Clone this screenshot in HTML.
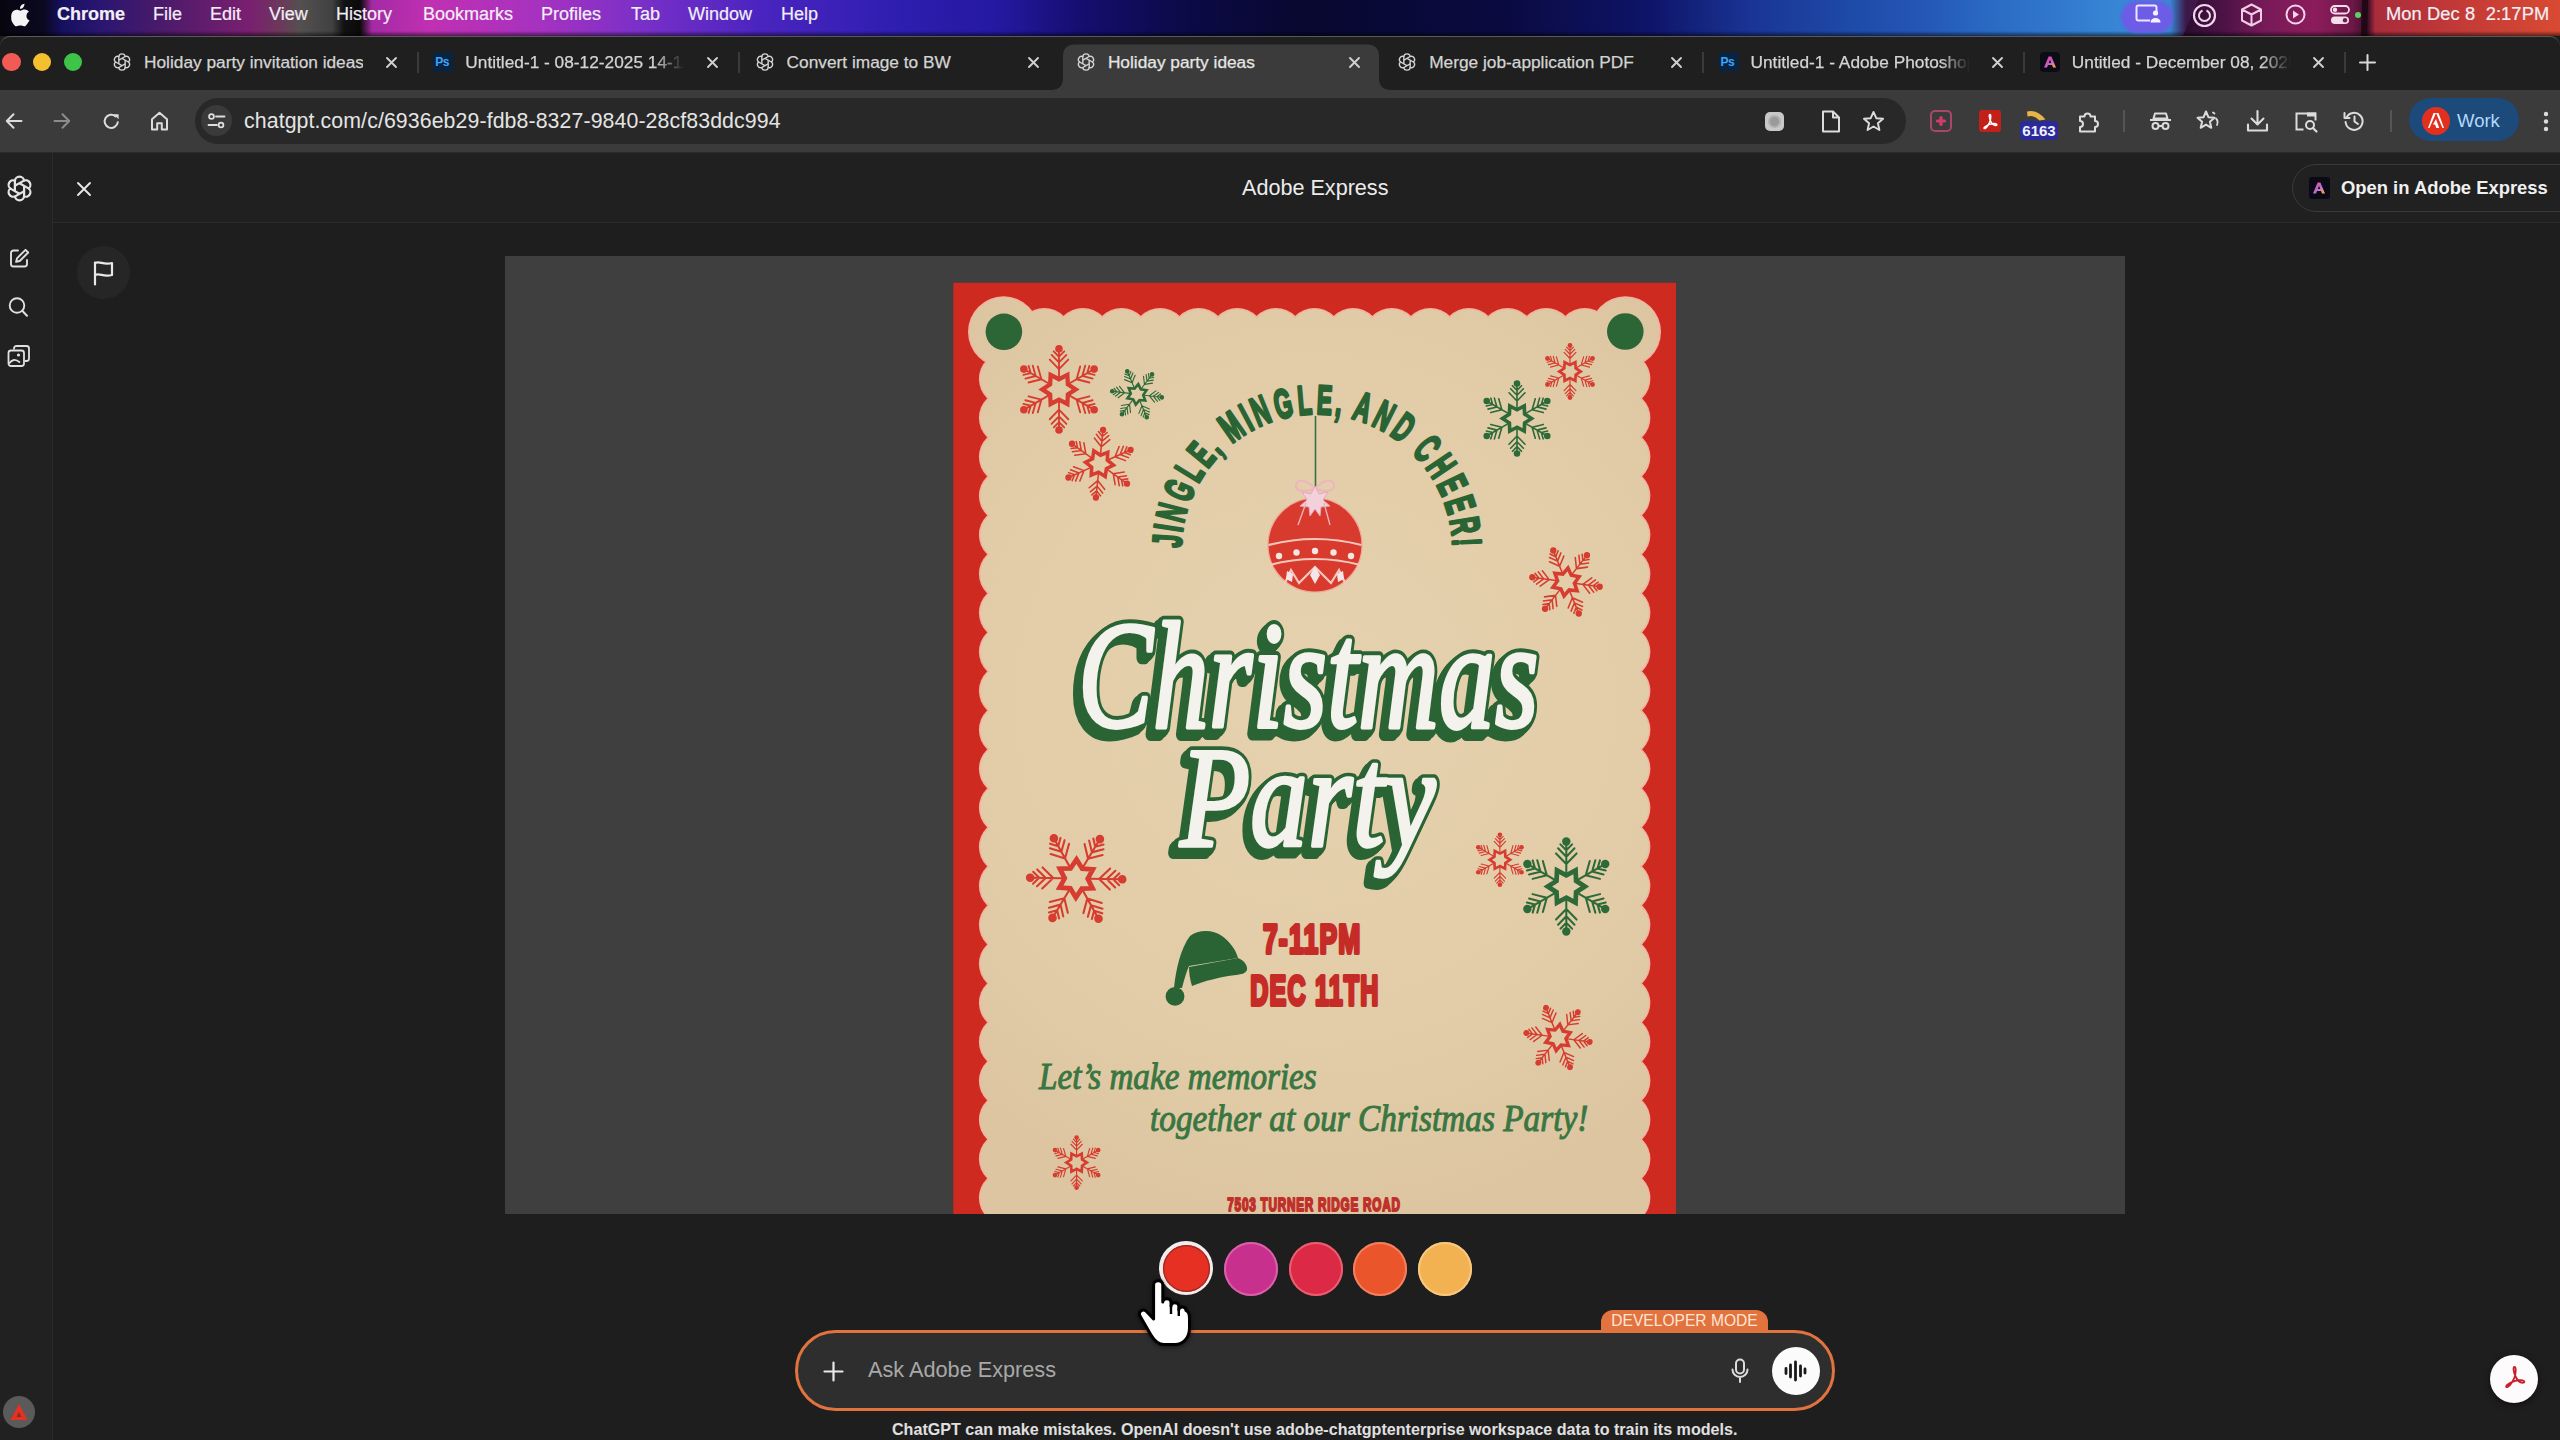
<!DOCTYPE html>
<html><head><meta charset="utf-8">
<style>
*{margin:0;padding:0;box-sizing:border-box}
html,body{width:2560px;height:1440px;overflow:hidden;background:#1e1e1e;font-family:"Liberation Sans",sans-serif;color:#e8e8e8}
.a{position:absolute}
svg{position:absolute;overflow:visible}
#menubar{left:0;top:0;width:2560px;height:36px;background:linear-gradient(90deg,#07060f 0px,#0b0820 44px,#161060 62px,#2a1670 100px,#4a1a6a 160px,#7a1f70 250px,#6a3a5a 282px,#545050 300px,#414141 332px,#121212 344px,#0a0a0a 360px,#a42aa4 372px,#c030b2 430px,#a632c0 540px,#7a30c8 640px,#4a24c0 760px,#2e1eb0 900px,#2418a0 1000px,#160e70 1080px,#0c0a48 1180px,#080830 1300px,#0a0a40 1500px,#0e1468 1650px,#1a3494 1750px,#1e4aa8 1850px,#2456b6 1920px,#2a6ac4 1990px,#3886d6 2120px,#3a86d4 2170px,#3a1848 2186px,#6a1a52 2250px,#8a1c5a 2310px,#6a1846 2352px,#1e0a16 2364px,#a83038 2374px,#c03c38 2460px,#d84a30 2560px)}
.mi{position:absolute;top:3px;font-size:18px;line-height:22px;color:#f2eef6;white-space:nowrap;-webkit-text-stroke:0.2px currentColor}
#tabstrip{left:0;top:36px;width:2560px;height:54px;background:#1f1f1f;border-top:1px solid #5a5a5a;border-radius:10px 10px 0 0}
.tt{position:absolute;top:51px;font-size:17.3px;line-height:22px;color:#d8d8d8;white-space:nowrap;overflow:hidden;-webkit-text-stroke:0.25px currentColor}
.tx{position:absolute;top:52px;font-size:20px;line-height:20px;color:#d0d0d0}
.sep{position:absolute;top:52px;width:2px;height:21px;background:#3a3a3a}
#toolbar{left:0;top:90px;width:2560px;height:63px;background:#3b3b3b}
#omni{left:195px;top:98px;width:1711px;height:46px;background:#282828;border-radius:23px}
#sidebar{left:0;top:153px;width:53px;height:1287px;background:#212121;border-right:1.5px solid #2b2b2b}
#header{left:53px;top:153px;width:2507px;height:70px;background:#202020;border-bottom:1.5px solid #2a2a2a}
#canvas{left:505px;top:256px;width:1620px;height:958px;background:#3f3f3f;overflow:hidden}
</style></head><body>
<div id="menubar" class="a"></div>
<svg style="left:2170px;top:0" width="390" height="36" viewBox="0 0 390 36"><defs><linearGradient id="mbr" x1="0" y1="0" x2="1" y2="0"><stop offset="0" stop-color="#2a0c30"/><stop offset=".1" stop-color="#4a1244"/><stop offset=".22" stop-color="#781a58"/><stop offset=".35" stop-color="#8c1c5c"/><stop offset=".45" stop-color="#6c1848"/><stop offset=".49" stop-color="#3a0e26"/><stop offset=".51" stop-color="#a82c3c"/><stop offset=".7" stop-color="#c03838"/><stop offset="1" stop-color="#d84a32"/></linearGradient></defs><path d="M28 0H390V36H13z" fill="url(#mbr)"/><path d="M192 0h6l-1 36h-6z" fill="#1a0810" opacity=".85"/></svg>
<div class="a" style="left:0;top:31px;width:2560px;height:5px;background:linear-gradient(180deg,rgba(0,0,0,0) 0,rgba(0,0,0,.55) 100%)"></div>
<svg style="left:11px;top:3px" width="20" height="24" viewBox="0 0 170 200"><path fill="#f4f4f4" d="M150.4 155.6c-2.8 6.4-6.1 12.3-9.9 17.7-5.2 7.4-9.5 12.5-12.8 15.3-5.1 4.7-10.6 7.1-16.5 7.3-4.2 0-9.3-1.2-15.2-3.6-6-2.4-11.5-3.6-16.5-3.6-5.3 0-10.9 1.2-17 3.6-6.1 2.4-11 3.7-14.7 3.8-5.7.2-11.3-2.3-16.9-7.5-3.6-3.1-8.1-8.4-13.4-16-5.7-8.1-10.4-17.5-14.1-28.2C3.4 132.8 1.4 121.5 1.4 110.6c0-12.5 2.7-23.3 8.1-32.3 4.2-7.2 9.9-12.9 16.9-17.1 7-4.2 14.6-6.3 22.8-6.5 4.5 0 10.3 1.4 17.6 4.1 7.3 2.7 12 4.1 14 4.1 1.5 0 6.7-1.6 15.4-4.9 8.3-3 15.3-4.2 21-3.7 15.5 1.2 27.1 7.3 34.8 18.3-13.8 8.4-20.7 20.2-20.6 35.4.1 11.8 4.4 21.6 12.8 29.4 3.8 3.6 8.1 6.4 12.8 8.4-1 3-2.1 5.8-3.2 8.6zM115 7.4c0 9.3-3.4 17.9-10.1 25.9-8.1 9.5-18 15-28.6 14.2-.1-1.1-.2-2.3-.2-3.6 0-8.9 3.9-18.4 10.8-26.2 3.4-3.9 7.8-7.2 13.1-9.8 5.3-2.6 10.3-4 15-4.2.1 1.2.2 2.5.2 3.7z"/></svg>
<div class="mi" style="left:57px;top:3px;font-weight:bold;font-size:18px">Chrome</div>
<div class="mi" style="left:153px;top:3px">File</div>
<div class="mi" style="left:210px;top:3px">Edit</div>
<div class="mi" style="left:269px;top:3px">View</div>
<div class="mi" style="left:336px;top:3px">History</div>
<div class="mi" style="left:423px;top:3px">Bookmarks</div>
<div class="mi" style="left:541px;top:3px">Profiles</div>
<div class="mi" style="left:631px;top:3px">Tab</div>
<div class="mi" style="left:688px;top:3px">Window</div>
<div class="mi" style="left:781px;top:3px">Help</div>
<!-- right status icons -->
<div class="a" style="left:2121px;top:1px;width:52px;height:32px;border-radius:16px;background:#6c5ce6;filter:blur(1.5px)"></div>
<svg style="left:2134px;top:4px" width="30" height="20" viewBox="0 0 30 20"><rect x="2.5" y="1.5" width="20" height="15" rx="2" fill="none" stroke="#eee6ff" stroke-width="2"/><rect x="16" y="8" width="12" height="12" fill="#6c5ce6"/><circle cx="21.5" cy="9" r="2.6" fill="#f4f0ff"/><path d="M16.5 18.5c0-3 2.2-4.6 5-4.6s5 1.6 5 4.6z" fill="#f4f0ff"/></svg>
<svg style="left:2192px;top:3px" width="25" height="25" viewBox="0 0 25 25"><circle cx="12.5" cy="12.5" r="10.5" fill="none" stroke="#f0d4ee" stroke-width="2.2"/><path d="M10.5 7.5a5.5 5.5 0 1 0 4 0" fill="none" stroke="#f0d4ee" stroke-width="2"/></svg>
<svg style="left:2240px;top:3px" width="23" height="24" viewBox="0 0 23 24"><path d="M11.5 1.5l9.5 5v11l-9.5 5-9.5-5v-11z M2 6.5l9.5 5 9.5-5 M11.5 11.5v11" fill="none" stroke="#f0cde6" stroke-width="2" stroke-linejoin="round"/></svg>
<svg style="left:2285px;top:4px" width="21" height="21" viewBox="0 0 21 21"><circle cx="10.5" cy="10.5" r="9" fill="none" stroke="#f4d4ea" stroke-width="2"/><path d="M8 6.5l6 4-6 4z" fill="#f4d4ea"/></svg>
<svg style="left:2330px;top:5px" width="20" height="20" viewBox="0 0 20 20"><rect x="1" y="1" width="18" height="7.5" rx="3.75" fill="none" stroke="#f4dcec" stroke-width="1.8"/><circle cx="5" cy="4.75" r="2.2" fill="#f4dcec"/><rect x="1" y="11.5" width="18" height="7.5" rx="3.75" fill="#f4dcec"/><circle cx="15" cy="15.25" r="2.2" fill="#6a2040"/></svg>
<div class="a" style="left:2355px;top:12px;width:6px;height:6px;border-radius:3px;background:#5cd060"></div>
<div class="mi" style="left:2386px;top:3px;font-size:18.3px;letter-spacing:0.1px">Mon Dec 8&nbsp;&nbsp;2:17PM</div>
<div id="tabstrip" class="a"></div>
<div class="a" style="left:2.3000000000000007px;top:53.0px;width:18.4px;height:18.4px;border-radius:50%;background:#f25a55"></div>
<div class="a" style="left:32.599999999999994px;top:53.0px;width:18.4px;height:18.4px;border-radius:50%;background:#f5c02e"></div>
<div class="a" style="left:63.8px;top:53.0px;width:18.4px;height:18.4px;border-radius:50%;background:#3fc44a"></div>
<svg style="left:0;top:0" width="2560" height="100"><path d="M1051 90 Q1063 90 1063 78 L1063 56.5 Q1063 44.5 1075 44.5 L1367 44.5 Q1379 44.5 1379 56.5 L1379 78 Q1379 90 1391 90 Z" fill="#3b3b3b"/></svg>
<svg style="left:112.0px;top:52.0px" width="20" height="20" viewBox="-11 -11 22 22"><g fill="none" stroke="#d4d4d4" stroke-width="1.5"><path d="M-3.5 2V-5.5a3.5 3.5 0 0 1 7 0" transform="rotate(0)"/><path d="M-3.5 2V-5.5a3.5 3.5 0 0 1 7 0" transform="rotate(60)"/><path d="M-3.5 2V-5.5a3.5 3.5 0 0 1 7 0" transform="rotate(120)"/><path d="M-3.5 2V-5.5a3.5 3.5 0 0 1 7 0" transform="rotate(180)"/><path d="M-3.5 2V-5.5a3.5 3.5 0 0 1 7 0" transform="rotate(240)"/><path d="M-3.5 2V-5.5a3.5 3.5 0 0 1 7 0" transform="rotate(300)"/></g></svg>
<div class="tt" style="left:144.0px;width:219.0px;color:#d4d4d4;">Holiday party invitation ideas</div>
<svg style="left:385.5px;top:57.0px" width="11" height="11" viewBox="0 0 11 11"><path d="M1 1L10 10M10 1L1 10" stroke="#d0d0d0" stroke-width="1.9" stroke-linecap="round"/></svg>
<div class="a" style="left:433.3px;top:52px;width:20px;height:20px;border-radius:4px;background:#0a2440"><div class="a" style="left:2px;top:3px;font-size:12px;line-height:14px;font-weight:bold;color:#3aa6ff;letter-spacing:-0.5px">Ps</div></div>
<div class="tt" style="left:465.3px;width:218.99999999999994px;color:#d4d4d4;-webkit-mask-image:linear-gradient(90deg,#000 188.99999999999994px,transparent 218.99999999999994px);">Untitled-1 - 08-12-2025 14-11-20</div>
<svg style="left:706.8px;top:57.0px" width="11" height="11" viewBox="0 0 11 11"><path d="M1 1L10 10M10 1L1 10" stroke="#d0d0d0" stroke-width="1.9" stroke-linecap="round"/></svg>
<svg style="left:754.6px;top:52.0px" width="20" height="20" viewBox="-11 -11 22 22"><g fill="none" stroke="#d4d4d4" stroke-width="1.5"><path d="M-3.5 2V-5.5a3.5 3.5 0 0 1 7 0" transform="rotate(0)"/><path d="M-3.5 2V-5.5a3.5 3.5 0 0 1 7 0" transform="rotate(60)"/><path d="M-3.5 2V-5.5a3.5 3.5 0 0 1 7 0" transform="rotate(120)"/><path d="M-3.5 2V-5.5a3.5 3.5 0 0 1 7 0" transform="rotate(180)"/><path d="M-3.5 2V-5.5a3.5 3.5 0 0 1 7 0" transform="rotate(240)"/><path d="M-3.5 2V-5.5a3.5 3.5 0 0 1 7 0" transform="rotate(300)"/></g></svg>
<div class="tt" style="left:786.6px;width:218.9999999999999px;color:#d4d4d4;">Convert image to BW</div>
<svg style="left:1028.1px;top:57.0px" width="11" height="11" viewBox="0 0 11 11"><path d="M1 1L10 10M10 1L1 10" stroke="#d0d0d0" stroke-width="1.9" stroke-linecap="round"/></svg>
<svg style="left:1075.9px;top:52.0px" width="20" height="20" viewBox="-11 -11 22 22"><g fill="none" stroke="#d4d4d4" stroke-width="1.5"><path d="M-3.5 2V-5.5a3.5 3.5 0 0 1 7 0" transform="rotate(0)"/><path d="M-3.5 2V-5.5a3.5 3.5 0 0 1 7 0" transform="rotate(60)"/><path d="M-3.5 2V-5.5a3.5 3.5 0 0 1 7 0" transform="rotate(120)"/><path d="M-3.5 2V-5.5a3.5 3.5 0 0 1 7 0" transform="rotate(180)"/><path d="M-3.5 2V-5.5a3.5 3.5 0 0 1 7 0" transform="rotate(240)"/><path d="M-3.5 2V-5.5a3.5 3.5 0 0 1 7 0" transform="rotate(300)"/></g></svg>
<div class="tt" style="left:1107.9px;width:219.0px;color:#e6e6e6;">Holiday party ideas</div>
<svg style="left:1349.4px;top:57.0px" width="11" height="11" viewBox="0 0 11 11"><path d="M1 1L10 10M10 1L1 10" stroke="#d0d0d0" stroke-width="1.9" stroke-linecap="round"/></svg>
<svg style="left:1397.2px;top:52.0px" width="20" height="20" viewBox="-11 -11 22 22"><g fill="none" stroke="#d4d4d4" stroke-width="1.5"><path d="M-3.5 2V-5.5a3.5 3.5 0 0 1 7 0" transform="rotate(0)"/><path d="M-3.5 2V-5.5a3.5 3.5 0 0 1 7 0" transform="rotate(60)"/><path d="M-3.5 2V-5.5a3.5 3.5 0 0 1 7 0" transform="rotate(120)"/><path d="M-3.5 2V-5.5a3.5 3.5 0 0 1 7 0" transform="rotate(180)"/><path d="M-3.5 2V-5.5a3.5 3.5 0 0 1 7 0" transform="rotate(240)"/><path d="M-3.5 2V-5.5a3.5 3.5 0 0 1 7 0" transform="rotate(300)"/></g></svg>
<div class="tt" style="left:1429.2px;width:219.0px;color:#d4d4d4;">Merge job-application PDF</div>
<svg style="left:1670.7px;top:57.0px" width="11" height="11" viewBox="0 0 11 11"><path d="M1 1L10 10M10 1L1 10" stroke="#d0d0d0" stroke-width="1.9" stroke-linecap="round"/></svg>
<div class="a" style="left:1718.5px;top:52px;width:20px;height:20px;border-radius:4px;background:#0a2440"><div class="a" style="left:2px;top:3px;font-size:12px;line-height:14px;font-weight:bold;color:#3aa6ff;letter-spacing:-0.5px">Ps</div></div>
<div class="tt" style="left:1750.5px;width:219.0px;color:#d4d4d4;-webkit-mask-image:linear-gradient(90deg,#000 189.0px,transparent 219.0px);">Untitled-1 - Adobe Photoshop</div>
<svg style="left:1992.0px;top:57.0px" width="11" height="11" viewBox="0 0 11 11"><path d="M1 1L10 10M10 1L1 10" stroke="#d0d0d0" stroke-width="1.9" stroke-linecap="round"/></svg>
<div class="a" style="left:2039.8000000000002px;top:52px;width:20px;height:20px;border-radius:4px;background:#0c0c18"></div><svg style="left:2041.8000000000002px;top:54px" width="16" height="16" viewBox="0 0 16 16"><defs><linearGradient id="axg" x1="0" y1="0" x2="1" y2="1"><stop offset="0" stop-color="#ff4a4a"/><stop offset=".5" stop-color="#c05ad8"/><stop offset="1" stop-color="#ffb02a"/></linearGradient></defs><path d="M6.6 2.5h2.8l4.6 11H11l-1-2.6H6l-1 2.6H2z M6.8 9h2.4L8 5.8z" fill="url(#axg)" fill-rule="evenodd"/></svg>
<div class="tt" style="left:2071.8px;width:219.0px;color:#d4d4d4;-webkit-mask-image:linear-gradient(90deg,#000 189.0px,transparent 219.0px);">Untitled - December 08, 2025</div>
<svg style="left:2313.3px;top:57.0px" width="11" height="11" viewBox="0 0 11 11"><path d="M1 1L10 10M10 1L1 10" stroke="#d0d0d0" stroke-width="1.9" stroke-linecap="round"/></svg>
<div class="sep" style="left:417px"></div>
<div class="sep" style="left:738px"></div>
<div class="sep" style="left:1702px"></div>
<div class="sep" style="left:2023px"></div>
<div class="sep" style="left:2344px"></div>
<svg style="left:2359px;top:54px" width="17" height="17" viewBox="0 0 17 17"><path d="M8.5 1v15M1 8.5h15" stroke="#d8d8d8" stroke-width="2" stroke-linecap="round"/></svg>
<div id="toolbar" class="a"></div>

<svg style="left:5px;top:112px" width="18" height="18" viewBox="0 0 18 18"><path d="M16.5 9H2M8.5 2.2L1.8 9l6.7 6.8" fill="none" stroke="#dcdcdc" stroke-width="2" stroke-linecap="round" stroke-linejoin="round"/></svg>
<svg style="left:53px;top:112px" width="18" height="18" viewBox="0 0 18 18"><path d="M1.5 9H16M9.5 2.2L16.2 9l-6.7 6.8" fill="none" stroke="#8c8c8c" stroke-width="2" stroke-linecap="round" stroke-linejoin="round"/></svg>
<svg style="left:102px;top:112px" width="19" height="19" viewBox="0 0 19 19"><path d="M15.8 10.2A6.6 6.6 0 1 1 13.6 4.4" fill="none" stroke="#dcdcdc" stroke-width="2" stroke-linecap="round"/><path d="M11.6 2.2h5v5z" fill="#dcdcdc"/></svg>
<svg style="left:150px;top:111px" width="19" height="20" viewBox="0 0 19 20"><path d="M2 18.5V8.2L9.5 1.8 17 8.2v10.3h-5.2v-6.3H7.2v6.3z" fill="none" stroke="#dcdcdc" stroke-width="2" stroke-linejoin="round"/></svg>
<div id="omni" class="a"></div>
<div class="a" style="left:201px;top:105px;width:31px;height:31px;border-radius:16px;background:#3a3a3a"></div>
<svg style="left:207px;top:112px" width="19" height="18" viewBox="0 0 19 18"><circle cx="4.5" cy="4.5" r="2.4" fill="none" stroke="#dedede" stroke-width="1.8"/><path d="M9 4.5h8.5" stroke="#dedede" stroke-width="1.8" stroke-linecap="round"/><circle cx="14" cy="13" r="2.4" fill="none" stroke="#dedede" stroke-width="1.8"/><path d="M1.5 13h8.5" stroke="#dedede" stroke-width="1.8" stroke-linecap="round"/></svg>
<div class="a" style="left:244px;top:108px;font-size:21.3px;line-height:26px;color:#e4e4e4;white-space:nowrap;letter-spacing:0.1px">chatgpt.com/c/6936eb29-fdb8-8327-9840-28cf83ddc994</div>
<div class="a" style="left:1765px;top:112px;width:19px;height:19px;border-radius:5px;background:#c8c8c8"></div>
<div class="a" style="left:1770px;top:117px;width:9px;height:9px;border-radius:5px;background:#9a9a9a;box-shadow:0 0 0 2px #b0b0b0"></div>
<svg style="left:1821px;top:110px" width="20" height="23" viewBox="0 0 20 23"><path d="M2 1.5h10l6 6v14H2z M12 1.5v6h6" fill="none" stroke="#dcdcdc" stroke-width="2" stroke-linejoin="round"/></svg>
<svg style="left:1862px;top:110px" width="23" height="22" viewBox="0 0 24 23"><path d="M12 2l2.9 6.6 7.1.6-5.4 4.7 1.6 7-6.2-3.7-6.2 3.7 1.6-7L2 9.2l7.1-.6z" fill="none" stroke="#dcdcdc" stroke-width="2" stroke-linejoin="round"/></svg>
<div class="a" style="left:1930px;top:110px;width:22px;height:22px;border-radius:5px;border:2px solid #a8466c;background:#3b3b3b"></div>
<svg style="left:1934px;top:114px" width="14" height="14" viewBox="0 0 14 14"><path d="M7 3.5v7M3.5 7h7" stroke="#d23c6c" stroke-width="3.2" stroke-linecap="round"/></svg>
<div class="a" style="left:1979px;top:110px;width:22px;height:22px;border-radius:3px;background:#c4201a"></div>
<svg style="left:1981px;top:112px" width="18" height="18" viewBox="0 0 18 18"><path d="M9 2.5c-1.2 0-.8 3 .5 6.2 1.4 3 3.6 5 5.6 4.7 1.6-.3.6-2-2.6-1.8-3 .2-6.6 1.6-8.8 3.4-1.2 1-.6 2 .6 1.3 2-1.2 4.4-5.5 5-8.2.4-2.2.8-5.6-.3-5.6z" fill="none" stroke="#fff" stroke-width="1.5"/></svg>
<svg style="left:2026px;top:109px" width="20" height="12" viewBox="0 0 20 12"><path d="M1 2.5Q11 0 19.5 10.5L13.5 11.5Q8 5.5 1.5 7.5z" fill="#e8b448"/></svg>
<div class="a" style="left:2020px;top:121px;width:38px;height:19px;border-radius:4px;background:#2a2a9a"></div>
<div class="a" style="left:2021px;top:121px;width:36px;font-size:15px;line-height:19px;font-weight:bold;color:#f0f0ff;text-align:center">6163</div>
<svg style="left:2077px;top:110px" width="23" height="23" viewBox="0 0 23 23"><path d="M3 6.5h4.5a3 3 0 0 1 6 0H18v4.5a3 3 0 0 1 0 6V21.5H3v-4.5a3 3 0 0 0 0-6z" fill="none" stroke="#dcdcdc" stroke-width="2" stroke-linejoin="round"/></svg>
<div class="a" style="left:2123px;top:110px;width:2px;height:22px;background:#555"></div>
<svg style="left:2149px;top:110px" width="23" height="21" viewBox="0 0 23 21"><path d="M6 3.5h11l1.5 5h-14z" fill="none" stroke="#dcdcdc" stroke-width="2" stroke-linejoin="round"/><path d="M1 10h21" stroke="#dcdcdc" stroke-width="2"/><circle cx="6.5" cy="16" r="3" fill="none" stroke="#dcdcdc" stroke-width="2"/><circle cx="16.5" cy="16" r="3" fill="none" stroke="#dcdcdc" stroke-width="2"/><path d="M9.5 16h4" stroke="#dcdcdc" stroke-width="2"/></svg>
<svg style="left:2196px;top:109px" width="24" height="23" viewBox="0 0 24 23"><path d="M10 2.5l2.5 5.8 6 .5-4.6 4 1.4 6-5.3-3.2-5.3 3.2 1.4-6-4.6-4 6-.5z" fill="none" stroke="#dcdcdc" stroke-width="2" stroke-linejoin="round"/><path d="M17 3.5l1.5 1M20 9.5c1.5 1.5 2 4 1 6.5" fill="none" stroke="#dcdcdc" stroke-width="1.8" stroke-linecap="round"/></svg>
<svg style="left:2246px;top:109px" width="23" height="24" viewBox="0 0 23 24"><path d="M11.5 2v13M5.5 9.5l6 6 6-6M2 15.5v6h19v-6" fill="none" stroke="#dcdcdc" stroke-width="2.1" stroke-linecap="round" stroke-linejoin="round"/></svg>
<svg style="left:2294px;top:110px" width="25" height="23" viewBox="0 0 25 23"><path d="M9.5 19.5H2.5V3.5h19v7" fill="none" stroke="#dcdcdc" stroke-width="2"/><rect x="13" y="2.5" width="9" height="4" fill="#dcdcdc"/><circle cx="16" cy="15" r="4" fill="none" stroke="#dcdcdc" stroke-width="2"/><path d="M19 18l3.5 3.5" stroke="#dcdcdc" stroke-width="2.2" stroke-linecap="round"/></svg>
<svg style="left:2343px;top:110px" width="22" height="22" viewBox="0 0 22 22"><path d="M3.5 7.5A8.5 8.5 0 1 1 2.6 12" fill="none" stroke="#dcdcdc" stroke-width="2" stroke-linecap="round"/><path d="M1.5 3v5h5" fill="none" stroke="#dcdcdc" stroke-width="2" stroke-linecap="round" stroke-linejoin="round"/><path d="M11.5 6.5v5l3.5 2.5" fill="none" stroke="#dcdcdc" stroke-width="2" stroke-linecap="round"/></svg>
<div class="a" style="left:2390px;top:110px;width:2px;height:22px;background:#555"></div>
<div class="a" style="left:2409px;top:98px;width:110px;height:43px;border-radius:22px;background:#1c4a7a"></div>
<div class="a" style="left:2422px;top:107px;width:28px;height:28px;border-radius:14px;background:#e2301f"></div>
<svg style="left:2427px;top:112px" width="18" height="17" viewBox="0 0 18 17"><path d="M1 16L6.5 1H9L2.5 16z M17 16L11.5 1H9L15.5 16z M9 7l3.2 9H9.4L8 12.4H6z" fill="#fff"/></svg>
<div class="a" style="left:2457px;top:108px;font-size:18.5px;line-height:26px;color:#b4d8fa;white-space:nowrap">Work</div>
<svg style="left:2542px;top:111px" width="8" height="21" viewBox="0 0 8 21"><circle cx="4" cy="3" r="2.2" fill="#dcdcdc"/><circle cx="4" cy="10.5" r="2.2" fill="#dcdcdc"/><circle cx="4" cy="18" r="2.2" fill="#dcdcdc"/></svg>
<div class="a" style="left:0;top:152px;width:2560px;height:2px;background:#2a2a2a"></div>
<div id="sidebar" class="a"></div>
<div id="header" class="a"></div>
<svg style="left:5px;top:174px" width="29" height="29" viewBox="-11 -11 22 22"><g fill="none" stroke="#e4e4e4" stroke-width="1.7"><path d="M-3.5 2V-5.5a3.5 3.5 0 0 1 7 0" transform="rotate(0)"/><path d="M-3.5 2V-5.5a3.5 3.5 0 0 1 7 0" transform="rotate(60)"/><path d="M-3.5 2V-5.5a3.5 3.5 0 0 1 7 0" transform="rotate(120)"/><path d="M-3.5 2V-5.5a3.5 3.5 0 0 1 7 0" transform="rotate(180)"/><path d="M-3.5 2V-5.5a3.5 3.5 0 0 1 7 0" transform="rotate(240)"/><path d="M-3.5 2V-5.5a3.5 3.5 0 0 1 7 0" transform="rotate(300)"/></g></svg>
<svg style="left:9px;top:248px" width="21" height="21" viewBox="0 0 21 21"><path d="M9 2.5H4.5a2.5 2.5 0 0 0-2.5 2.5v11a2.5 2.5 0 0 0 2.5 2.5h11a2.5 2.5 0 0 0 2.5-2.5V12" fill="none" stroke="#e0e0e0" stroke-width="1.9" stroke-linecap="round"/><path d="M16.5 1.8l2.7 2.7-8.5 8.5-3.6.9.9-3.6z" fill="none" stroke="#e0e0e0" stroke-width="1.9" stroke-linejoin="round"/></svg>
<svg style="left:8px;top:296px" width="21" height="22" viewBox="0 0 21 22"><circle cx="9" cy="9.5" r="7.3" fill="none" stroke="#e0e0e0" stroke-width="1.9"/><path d="M14.5 15l4.5 4.8" stroke="#e0e0e0" stroke-width="2" stroke-linecap="round"/></svg>
<svg style="left:7px;top:344px" width="24" height="24" viewBox="0 0 24 24"><path d="M7 5.5V4.5a2.5 2.5 0 0 1 2.5-2.5h10a2.5 2.5 0 0 1 2.5 2.5v10a2.5 2.5 0 0 1-2.5 2.5H18" fill="none" stroke="#e0e0e0" stroke-width="1.8"/><rect x="1.5" y="6.5" width="15.5" height="15.5" rx="2.5" fill="none" stroke="#e0e0e0" stroke-width="1.8"/><circle cx="11.5" cy="11" r="1.6" fill="#e0e0e0"/><path d="M2 19.5c3-4 6-5 11-1" fill="none" stroke="#e0e0e0" stroke-width="1.8"/></svg>
<svg style="left:77px;top:182px" width="14" height="14" viewBox="0 0 14 14"><path d="M1 1l12 12M13 1L1 13" stroke="#e8e8e8" stroke-width="1.9" stroke-linecap="round"/></svg>
<div class="a" style="left:1242px;top:175px;font-size:21.6px;line-height:26px;color:#ececec;white-space:nowrap">Adobe Express</div>
<div class="a" style="left:2292px;top:164px;width:300px;height:48px;border-radius:24px;border:1.5px solid #3a3a3a;background:#212121"></div>
<div class="a" style="left:2309px;top:177px;width:21px;height:22px;border-radius:3px;background:#0a0a16"></div>
<svg style="left:2311px;top:180px" width="16" height="16" viewBox="0 0 16 16"><defs><linearGradient id="axg2" x1="0" y1="0" x2="1" y2="1"><stop offset="0" stop-color="#ff5050"/><stop offset=".5" stop-color="#b86ae0"/><stop offset="1" stop-color="#ffb030"/></linearGradient></defs><path d="M6.6 2.5h2.8l4.6 11H11l-1-2.6H6l-1 2.6H2z M6.8 9h2.4L8 5.8z" fill="url(#axg2)" fill-rule="evenodd"/></svg>
<div class="a" style="left:2341px;top:175px;font-size:18.4px;line-height:26px;font-weight:bold;color:#f0f0f0;white-space:nowrap">Open in Adobe Express</div>
<div class="a" style="left:77px;top:246px;width:53px;height:53px;border-radius:27px;background:#262626"></div>
<svg style="left:92px;top:259px" width="24" height="27" viewBox="0 0 24 27"><path d="M3 25.5V3.5" stroke="#e8e8e8" stroke-width="2.2" stroke-linecap="round"/><path d="M3 4c5-2.5 8 2.5 17 0v12c-9 2.5-12-2.5-17 0" fill="none" stroke="#e8e8e8" stroke-width="2.2" stroke-linejoin="round"/></svg>
<div id="canvas" class="a"></div>
<!-- sidebar avatar -->
<div class="a" style="left:3px;top:1396px;width:32px;height:32px;border-radius:16px;background:#5a5a5a"></div>
<svg style="left:8px;top:1401px" width="22" height="22" viewBox="0 0 22 22"><path d="M11 3L19.5 19H2.5z" fill="#e8301e"/><path d="M11 11l2.5 5h-5z" fill="#7a3030"/></svg>
<!-- color swatches -->
<div class="a" style="left:1159px;top:1241px;width:54px;height:54px;border-radius:27px;background:#f4ecec"></div>
<div class="a" style="left:1162.5px;top:1244.5px;width:47px;height:47px;border-radius:24px;background:#e63024;box-shadow:inset 0 0 0 1.2px #9a2a22"></div>
<div class="a" style="left:1223.5px;top:1241.5px;width:54px;height:54px;border-radius:27px;background:#c8308e;box-shadow:inset 0 0 0 2px #d860a8"></div>
<div class="a" style="left:1288.5px;top:1241.5px;width:54px;height:54px;border-radius:27px;background:#dc2a46;box-shadow:inset 0 0 0 2px #e86070"></div>
<div class="a" style="left:1353px;top:1241.5px;width:54px;height:54px;border-radius:27px;background:#ea552b;box-shadow:inset 0 0 0 2px #f08060"></div>
<div class="a" style="left:1418px;top:1241.5px;width:54px;height:54px;border-radius:27px;background:#f2b252;box-shadow:inset 0 0 0 2px #f8c880"></div>
<!-- input -->
<div class="a" style="left:1601px;top:1310px;width:167px;height:26px;border-radius:12px 12px 0 0;background:#e2733e"></div>
<div class="a" style="left:1601px;top:1311px;width:167px;font-size:15.6px;line-height:20px;color:#fde6d4;text-align:center;white-space:nowrap">DEVELOPER MODE</div>
<div class="a" style="left:795px;top:1330px;width:1040px;height:81px;border-radius:41px;border:3.5px solid #e0733e;background:#2e2e2e"></div>
<svg style="left:823px;top:1361px" width="21" height="21" viewBox="0 0 21 21"><path d="M10.5 1.5v18M1.5 10.5h18" stroke="#e8e8e8" stroke-width="2.2" stroke-linecap="round"/></svg>
<div class="a" style="left:868px;top:1356px;font-size:21.7px;line-height:28px;color:#a8a8a8;white-space:nowrap">Ask Adobe Express</div>
<svg style="left:1730px;top:1358px" width="20" height="26" viewBox="0 0 20 26"><rect x="6" y="1.5" width="8" height="14" rx="4" fill="none" stroke="#dcdcdc" stroke-width="2"/><path d="M2.5 11.5a7.5 7.5 0 0 0 15 0M10 19v5" fill="none" stroke="#dcdcdc" stroke-width="2" stroke-linecap="round"/></svg>
<div class="a" style="left:1771.5px;top:1347px;width:48px;height:48px;border-radius:24px;background:#fbfbfb"></div>
<svg style="left:1783px;top:1359px" width="25" height="24" viewBox="0 0 25 24"><path d="M3 9.5v5M7.5 6v12M12.5 3v18M17.5 7v10M22 10v4" stroke="#1a1a1a" stroke-width="2.8" stroke-linecap="round"/></svg>
<div class="a" style="left:892px;top:1419px;font-size:16.1px;line-height:20px;font-weight:bold;color:#e0e0e0;white-space:nowrap">ChatGPT can make mistakes. OpenAI doesn't use adobe-chatgptenterprise workspace data to train its models.</div>
<!-- acrobat float -->
<div class="a" style="left:2490px;top:1355px;width:48px;height:48px;border-radius:24px;background:#fdfbfb;box-shadow:0 2px 6px rgba(0,0,0,.5)"></div>
<svg style="left:2501px;top:1364px" width="26" height="28" viewBox="0 0 26 28"><path d="M13.5 3c-1.6 0-1.2 4.4.8 9 2 4.3 5.2 7.2 8 6.7 2.2-.4.8-2.8-3.6-2.5-4.2.3-9.4 2.3-12.6 4.8-1.8 1.4-.9 2.8.9 1.8 2.9-1.7 6.3-7.8 7.2-11.7.6-3.2 1-8.1-.7-8.1z" fill="none" stroke="#c8202a" stroke-width="1.8"/></svg>
<svg style="left:505px;top:256px;overflow:hidden" width="1620" height="958" viewBox="505 256 1620 958">
<defs>
<g id="flake"><path d="M14.0 0.0L44.0 0.0M23.0 0.0L33.8 10.5M23.0 0.0L33.8 -10.5M30.5 0.0L39.1 8.4M30.5 0.0L39.1 -8.4M37.0 0.0L43.1 5.9M37.0 0.0L43.1 -5.9M7.0 12.1L22.0 38.1M11.5 19.9L7.8 34.5M11.5 19.9L26.0 24.0M15.3 26.4L12.3 38.1M15.3 26.4L26.8 29.7M18.5 32.0L16.4 40.3M18.5 32.0L26.7 34.4M-7.0 12.1L-22.0 38.1M-11.5 19.9L-26.0 24.0M-11.5 19.9L-7.8 34.5M-15.2 26.4L-26.8 29.7M-15.2 26.4L-12.3 38.1M-18.5 32.0L-26.7 34.4M-18.5 32.0L-16.4 40.3M-14.0 0.0L-44.0 0.0M-23.0 0.0L-33.8 -10.5M-23.0 0.0L-33.8 10.5M-30.5 0.0L-39.1 -8.4M-30.5 0.0L-39.1 8.4M-37.0 0.0L-43.1 -5.9M-37.0 0.0L-43.1 6.0M-7.0 -12.1L-22.0 -38.1M-11.5 -19.9L-7.8 -34.5M-11.5 -19.9L-26.0 -24.0M-15.3 -26.4L-12.3 -38.1M-15.3 -26.4L-26.8 -29.7M-18.5 -32.0L-16.4 -40.3M-18.5 -32.0L-26.7 -34.4M7.0 -12.1L22.0 -38.1M11.5 -19.9L26.0 -24.0M11.5 -19.9L7.8 -34.5M15.3 -26.4L26.8 -29.7M15.3 -26.4L12.3 -38.1M18.5 -32.0L26.7 -34.4M18.5 -32.0L16.4 -40.3" fill="none" stroke-width="2.1" stroke-linecap="round" stroke="currentColor"/><polygon points="11.5 0.0 16.5 9.5 5.8 10.0 0.0 19.0 -5.7 10.0 -16.5 9.5 -11.5 0.0 -16.5 -9.5 -5.8 -10.0 -0.0 -19.0 5.8 -10.0 16.5 -9.5" fill="none" stroke="currentColor" stroke-width="4.8" stroke-linejoin="miter"/><g fill="currentColor"><circle cx="46.0" cy="0.0" r="4.3"/><circle cx="23.0" cy="39.8" r="4.3"/><circle cx="-23.0" cy="39.8" r="4.3"/><circle cx="-46.0" cy="0.0" r="4.3"/><circle cx="-23.0" cy="-39.8" r="4.3"/><circle cx="23.0" cy="-39.8" r="4.3"/></g></g>
<radialGradient id="paper" gradientUnits="userSpaceOnUse" cx="1315" cy="700" r="520"><stop offset="0" stop-color="#e6d1ae"/><stop offset=".7" stop-color="#e2cca8"/><stop offset="1" stop-color="#dcc5a0"/></radialGradient>
</defs>
<rect x="953.3" y="282.8" width="722.7" height="1000" fill="#cf2a1f"/>
<g fill="#f0b4a0"><circle cx="1003.6" cy="331.8" r="35.6"/><circle cx="1625.4" cy="331.8" r="35.6"/><circle cx="1044.3" cy="335.0" r="27.1"/><circle cx="1082.9" cy="335.0" r="27.1"/><circle cx="1121.5" cy="335.0" r="27.1"/><circle cx="1160.1" cy="335.0" r="27.1"/><circle cx="1198.7" cy="335.0" r="27.1"/><circle cx="1237.3" cy="335.0" r="27.1"/><circle cx="1275.9" cy="335.0" r="27.1"/><circle cx="1314.5" cy="335.0" r="27.1"/><circle cx="1353.1" cy="335.0" r="27.1"/><circle cx="1391.7" cy="335.0" r="27.1"/><circle cx="1430.3" cy="335.0" r="27.1"/><circle cx="1468.9" cy="335.0" r="27.1"/><circle cx="1507.5" cy="335.0" r="27.1"/><circle cx="1546.1" cy="335.0" r="27.1"/><circle cx="1584.7" cy="335.0" r="27.1"/><circle cx="1006.0" cy="378.8" r="27.1"/><circle cx="1623.3" cy="378.8" r="27.1"/><circle cx="1006.0" cy="417.8" r="27.1"/><circle cx="1623.3" cy="417.8" r="27.1"/><circle cx="1006.0" cy="456.8" r="27.1"/><circle cx="1623.3" cy="456.8" r="27.1"/><circle cx="1006.0" cy="495.8" r="27.1"/><circle cx="1623.3" cy="495.8" r="27.1"/><circle cx="1006.0" cy="534.8" r="27.1"/><circle cx="1623.3" cy="534.8" r="27.1"/><circle cx="1006.0" cy="573.8" r="27.1"/><circle cx="1623.3" cy="573.8" r="27.1"/><circle cx="1006.0" cy="612.8" r="27.1"/><circle cx="1623.3" cy="612.8" r="27.1"/><circle cx="1006.0" cy="651.8" r="27.1"/><circle cx="1623.3" cy="651.8" r="27.1"/><circle cx="1006.0" cy="690.8" r="27.1"/><circle cx="1623.3" cy="690.8" r="27.1"/><circle cx="1006.0" cy="729.8" r="27.1"/><circle cx="1623.3" cy="729.8" r="27.1"/><circle cx="1006.0" cy="768.8" r="27.1"/><circle cx="1623.3" cy="768.8" r="27.1"/><circle cx="1006.0" cy="807.8" r="27.1"/><circle cx="1623.3" cy="807.8" r="27.1"/><circle cx="1006.0" cy="846.8" r="27.1"/><circle cx="1623.3" cy="846.8" r="27.1"/><circle cx="1006.0" cy="885.8" r="27.1"/><circle cx="1623.3" cy="885.8" r="27.1"/><circle cx="1006.0" cy="924.8" r="27.1"/><circle cx="1623.3" cy="924.8" r="27.1"/><circle cx="1006.0" cy="963.8" r="27.1"/><circle cx="1623.3" cy="963.8" r="27.1"/><circle cx="1006.0" cy="1002.8" r="27.1"/><circle cx="1623.3" cy="1002.8" r="27.1"/><circle cx="1006.0" cy="1041.8" r="27.1"/><circle cx="1623.3" cy="1041.8" r="27.1"/><circle cx="1006.0" cy="1080.8" r="27.1"/><circle cx="1623.3" cy="1080.8" r="27.1"/><circle cx="1006.0" cy="1119.8" r="27.1"/><circle cx="1623.3" cy="1119.8" r="27.1"/><circle cx="1006.0" cy="1158.8" r="27.1"/><circle cx="1623.3" cy="1158.8" r="27.1"/><circle cx="1006.0" cy="1197.8" r="27.1"/><circle cx="1623.3" cy="1197.8" r="27.1"/><circle cx="1006.0" cy="1236.8" r="27.1"/><circle cx="1623.3" cy="1236.8" r="27.1"/><circle cx="1006.0" cy="1275.8" r="27.1"/><circle cx="1623.3" cy="1275.8" r="27.1"/><circle cx="1006.0" cy="1314.8" r="27.1"/><circle cx="1623.3" cy="1314.8" r="27.1"/><rect x="1006" y="335" width="617.3" height="950"/></g>
<g fill="url(#paper)"><circle cx="1003.6" cy="331.8" r="34.0"/><circle cx="1625.4" cy="331.8" r="34.0"/><circle cx="1044.3" cy="335.0" r="25.5"/><circle cx="1082.9" cy="335.0" r="25.5"/><circle cx="1121.5" cy="335.0" r="25.5"/><circle cx="1160.1" cy="335.0" r="25.5"/><circle cx="1198.7" cy="335.0" r="25.5"/><circle cx="1237.3" cy="335.0" r="25.5"/><circle cx="1275.9" cy="335.0" r="25.5"/><circle cx="1314.5" cy="335.0" r="25.5"/><circle cx="1353.1" cy="335.0" r="25.5"/><circle cx="1391.7" cy="335.0" r="25.5"/><circle cx="1430.3" cy="335.0" r="25.5"/><circle cx="1468.9" cy="335.0" r="25.5"/><circle cx="1507.5" cy="335.0" r="25.5"/><circle cx="1546.1" cy="335.0" r="25.5"/><circle cx="1584.7" cy="335.0" r="25.5"/><circle cx="1006.0" cy="378.8" r="25.5"/><circle cx="1623.3" cy="378.8" r="25.5"/><circle cx="1006.0" cy="417.8" r="25.5"/><circle cx="1623.3" cy="417.8" r="25.5"/><circle cx="1006.0" cy="456.8" r="25.5"/><circle cx="1623.3" cy="456.8" r="25.5"/><circle cx="1006.0" cy="495.8" r="25.5"/><circle cx="1623.3" cy="495.8" r="25.5"/><circle cx="1006.0" cy="534.8" r="25.5"/><circle cx="1623.3" cy="534.8" r="25.5"/><circle cx="1006.0" cy="573.8" r="25.5"/><circle cx="1623.3" cy="573.8" r="25.5"/><circle cx="1006.0" cy="612.8" r="25.5"/><circle cx="1623.3" cy="612.8" r="25.5"/><circle cx="1006.0" cy="651.8" r="25.5"/><circle cx="1623.3" cy="651.8" r="25.5"/><circle cx="1006.0" cy="690.8" r="25.5"/><circle cx="1623.3" cy="690.8" r="25.5"/><circle cx="1006.0" cy="729.8" r="25.5"/><circle cx="1623.3" cy="729.8" r="25.5"/><circle cx="1006.0" cy="768.8" r="25.5"/><circle cx="1623.3" cy="768.8" r="25.5"/><circle cx="1006.0" cy="807.8" r="25.5"/><circle cx="1623.3" cy="807.8" r="25.5"/><circle cx="1006.0" cy="846.8" r="25.5"/><circle cx="1623.3" cy="846.8" r="25.5"/><circle cx="1006.0" cy="885.8" r="25.5"/><circle cx="1623.3" cy="885.8" r="25.5"/><circle cx="1006.0" cy="924.8" r="25.5"/><circle cx="1623.3" cy="924.8" r="25.5"/><circle cx="1006.0" cy="963.8" r="25.5"/><circle cx="1623.3" cy="963.8" r="25.5"/><circle cx="1006.0" cy="1002.8" r="25.5"/><circle cx="1623.3" cy="1002.8" r="25.5"/><circle cx="1006.0" cy="1041.8" r="25.5"/><circle cx="1623.3" cy="1041.8" r="25.5"/><circle cx="1006.0" cy="1080.8" r="25.5"/><circle cx="1623.3" cy="1080.8" r="25.5"/><circle cx="1006.0" cy="1119.8" r="25.5"/><circle cx="1623.3" cy="1119.8" r="25.5"/><circle cx="1006.0" cy="1158.8" r="25.5"/><circle cx="1623.3" cy="1158.8" r="25.5"/><circle cx="1006.0" cy="1197.8" r="25.5"/><circle cx="1623.3" cy="1197.8" r="25.5"/><circle cx="1006.0" cy="1236.8" r="25.5"/><circle cx="1623.3" cy="1236.8" r="25.5"/><circle cx="1006.0" cy="1275.8" r="25.5"/><circle cx="1623.3" cy="1275.8" r="25.5"/><circle cx="1006.0" cy="1314.8" r="25.5"/><circle cx="1623.3" cy="1314.8" r="25.5"/><rect x="1006" y="335" width="617.3" height="950"/></g>
<circle cx="1003.9" cy="331.8" r="18.3" fill="#2c6636"/><circle cx="1625.3" cy="331.5" r="18.3" fill="#2c6636"/>
<use href="#flake" color="#d63c30" transform="translate(1059 389.4) rotate(90) scale(0.883)"/>
<use href="#flake" color="#2e6a38" transform="translate(1137 394.3) rotate(7) scale(0.543)"/>
<use href="#flake" color="#d63c30" transform="translate(1099.5 463.7) rotate(96) scale(0.739)"/>
<use href="#flake" color="#2e6a38" transform="translate(1517 418.5) rotate(90) scale(0.761)"/>
<use href="#flake" color="#d63c30" transform="translate(1570 371.5) rotate(90) scale(0.565)"/>
<use href="#flake" color="#d63c30" transform="translate(1566 582) rotate(8) scale(0.739)"/>
<use href="#flake" color="#d63c30" transform="translate(1076.2 878.5) rotate(1) scale(1.000)"/>
<use href="#flake" color="#d63c30" transform="translate(1499.9 859.8) rotate(90) scale(0.543)"/>
<use href="#flake" color="#2e6a38" transform="translate(1566.3 886.5) rotate(90) scale(0.978)"/>
<use href="#flake" color="#d63c30" transform="translate(1558 1037.5) rotate(8) scale(0.696)"/>
<use href="#flake" color="#d63c30" transform="translate(1076.6 1162.6) rotate(90) scale(0.543)"/>
<text transform="translate(1181.3 541.7) rotate(-86.5) scale(0.56 1)" text-anchor="middle" font-family="Liberation Sans" font-weight="bold" font-size="41" fill="#2a6434" stroke="#2a6434" stroke-width="2.3" vector-effect="non-scaling-stroke" stroke-linejoin="round">J</text>
<text transform="translate(1182.5 529.9) rotate(-81.5) scale(0.56 1)" text-anchor="middle" font-family="Liberation Sans" font-weight="bold" font-size="41" fill="#2a6434" stroke="#2a6434" stroke-width="2.3" vector-effect="non-scaling-stroke" stroke-linejoin="round">I</text>
<text transform="translate(1185.3 515.9) rotate(-75.5) scale(0.56 1)" text-anchor="middle" font-family="Liberation Sans" font-weight="bold" font-size="41" fill="#2a6434" stroke="#2a6434" stroke-width="2.3" vector-effect="non-scaling-stroke" stroke-linejoin="round">N</text>
<text transform="translate(1192.3 495.7) rotate(-66.5) scale(0.56 1)" text-anchor="middle" font-family="Liberation Sans" font-weight="bold" font-size="41" fill="#2a6434" stroke="#2a6434" stroke-width="2.3" vector-effect="non-scaling-stroke" stroke-linejoin="round">G</text>
<text transform="translate(1201.5 478.2) rotate(-58.1) scale(0.56 1)" text-anchor="middle" font-family="Liberation Sans" font-weight="bold" font-size="41" fill="#2a6434" stroke="#2a6434" stroke-width="2.3" vector-effect="non-scaling-stroke" stroke-linejoin="round">L</text>
<text transform="translate(1212.1 463.4) rotate(-50.5) scale(0.56 1)" text-anchor="middle" font-family="Liberation Sans" font-weight="bold" font-size="41" fill="#2a6434" stroke="#2a6434" stroke-width="2.3" vector-effect="non-scaling-stroke" stroke-linejoin="round">E</text>
<text transform="translate(1221.2 453.5) rotate(-44.8) scale(0.56 1)" text-anchor="middle" font-family="Liberation Sans" font-weight="bold" font-size="41" fill="#2a6434" stroke="#2a6434" stroke-width="2.3" vector-effect="non-scaling-stroke" stroke-linejoin="round">,</text>
<text transform="translate(1239.4 438.3) rotate(-34.8) scale(0.56 1)" text-anchor="middle" font-family="Liberation Sans" font-weight="bold" font-size="41" fill="#2a6434" stroke="#2a6434" stroke-width="2.3" vector-effect="non-scaling-stroke" stroke-linejoin="round">M</text>
<text transform="translate(1252.9 430.0) rotate(-28.1) scale(0.56 1)" text-anchor="middle" font-family="Liberation Sans" font-weight="bold" font-size="41" fill="#2a6434" stroke="#2a6434" stroke-width="2.3" vector-effect="non-scaling-stroke" stroke-linejoin="round">I</text>
<text transform="translate(1265.8 424.0) rotate(-22.1) scale(0.56 1)" text-anchor="middle" font-family="Liberation Sans" font-weight="bold" font-size="41" fill="#2a6434" stroke="#2a6434" stroke-width="2.3" vector-effect="non-scaling-stroke" stroke-linejoin="round">N</text>
<text transform="translate(1286.2 417.5) rotate(-13.1) scale(0.56 1)" text-anchor="middle" font-family="Liberation Sans" font-weight="bold" font-size="41" fill="#2a6434" stroke="#2a6434" stroke-width="2.3" vector-effect="non-scaling-stroke" stroke-linejoin="round">G</text>
<text transform="translate(1305.7 414.5) rotate(-4.8) scale(0.56 1)" text-anchor="middle" font-family="Liberation Sans" font-weight="bold" font-size="41" fill="#2a6434" stroke="#2a6434" stroke-width="2.3" vector-effect="non-scaling-stroke" stroke-linejoin="round">L</text>
<text transform="translate(1323.9 414.2) rotate(2.9) scale(0.56 1)" text-anchor="middle" font-family="Liberation Sans" font-weight="bold" font-size="41" fill="#2a6434" stroke="#2a6434" stroke-width="2.3" vector-effect="non-scaling-stroke" stroke-linejoin="round">E</text>
<text transform="translate(1337.3 415.5) rotate(8.6) scale(0.56 1)" text-anchor="middle" font-family="Liberation Sans" font-weight="bold" font-size="41" fill="#2a6434" stroke="#2a6434" stroke-width="2.3" vector-effect="non-scaling-stroke" stroke-linejoin="round">,</text>
<text transform="translate(1358.9 420.6) rotate(17.9) scale(0.56 1)" text-anchor="middle" font-family="Liberation Sans" font-weight="bold" font-size="41" fill="#2a6434" stroke="#2a6434" stroke-width="2.3" vector-effect="non-scaling-stroke" stroke-linejoin="round">A</text>
<text transform="translate(1377.9 428.4) rotate(26.6) scale(0.56 1)" text-anchor="middle" font-family="Liberation Sans" font-weight="bold" font-size="41" fill="#2a6434" stroke="#2a6434" stroke-width="2.3" vector-effect="non-scaling-stroke" stroke-linejoin="round">N</text>
<text transform="translate(1395.6 439.0) rotate(35.3) scale(0.56 1)" text-anchor="middle" font-family="Liberation Sans" font-weight="bold" font-size="41" fill="#2a6434" stroke="#2a6434" stroke-width="2.3" vector-effect="non-scaling-stroke" stroke-linejoin="round">D</text>
<text transform="translate(1416.9 457.8) rotate(47.3) scale(0.56 1)" text-anchor="middle" font-family="Liberation Sans" font-weight="bold" font-size="41" fill="#2a6434" stroke="#2a6434" stroke-width="2.3" vector-effect="non-scaling-stroke" stroke-linejoin="round">C</text>
<text transform="translate(1429.7 473.9) rotate(56.0) scale(0.56 1)" text-anchor="middle" font-family="Liberation Sans" font-weight="bold" font-size="41" fill="#2a6434" stroke="#2a6434" stroke-width="2.3" vector-effect="non-scaling-stroke" stroke-linejoin="round">H</text>
<text transform="translate(1439.6 491.0) rotate(64.3) scale(0.56 1)" text-anchor="middle" font-family="Liberation Sans" font-weight="bold" font-size="41" fill="#2a6434" stroke="#2a6434" stroke-width="2.3" vector-effect="non-scaling-stroke" stroke-linejoin="round">E</text>
<text transform="translate(1446.6 508.7) rotate(72.3) scale(0.56 1)" text-anchor="middle" font-family="Liberation Sans" font-weight="bold" font-size="41" fill="#2a6434" stroke="#2a6434" stroke-width="2.3" vector-effect="non-scaling-stroke" stroke-linejoin="round">E</text>
<text transform="translate(1451.2 527.9) rotate(80.7) scale(0.56 1)" text-anchor="middle" font-family="Liberation Sans" font-weight="bold" font-size="41" fill="#2a6434" stroke="#2a6434" stroke-width="2.3" vector-effect="non-scaling-stroke" stroke-linejoin="round">R</text>
<text transform="translate(1452.8 542.9) rotate(87.0) scale(0.56 1)" text-anchor="middle" font-family="Liberation Sans" font-weight="bold" font-size="41" fill="#2a6434" stroke="#2a6434" stroke-width="2.3" vector-effect="non-scaling-stroke" stroke-linejoin="round">!</text>
<path d="M1315.5 416V487" stroke="#3a7040" stroke-width="1.6"/>
<g fill="none" stroke="#eeb6bc" stroke-width="2.2"><path d="M1315 489c-6-8-18-12-19-4s12 6 19 4zM1315 489c6-8 18-12 19-4s-12 6-19 4z"/></g>
<circle cx="1315" cy="545" r="47" fill="#d83a2e" stroke="#f0a898" stroke-width="1.2"/>
<path d="M1315 486l4 8 9-2-5 8 7 6-9 1-1 9-5-7-5 7-1-9-9-1 7-6-5-8 9 2z" fill="#f2d0dc" stroke="#e8a8b8" stroke-width="1"/>
<path d="M1306 503l-8 22M1324 503l6 22" stroke="#f0b0b8" stroke-width="1.4"/>
<path d="M1268.5 545Q1315 533 1361.5 545M1269.5 565Q1315 553 1360.5 565" fill="none" stroke="#f6c8bc" stroke-width="2.2"/>
<g fill="#f6e6e0"><circle cx="1279" cy="556" r="3.2"/><circle cx="1296.5" cy="552.5" r="3.2"/><circle cx="1315" cy="551" r="3.2"/><circle cx="1333.5" cy="552.5" r="3.2"/><circle cx="1351" cy="556" r="3.2"/></g>
<path d="M1283 587l8-17 8 13 16-16 16 16 8-13 8 17" fill="none" stroke="#f6c8bc" stroke-width="2.2"/>
<g fill="#f4e6e8"><path d="M1315 566l5 9-5 9-5-9z"/><path d="M1287 571l6 3-1 8-6-3z"/><path d="M1343 571l-6 3 1 8 6-3z"/></g>
<text transform="translate(1076.3 728.8) scale(1 1.36)" font-family="Liberation Serif" font-style="italic" font-size="112" stroke-linejoin="round" fill="#2a6434" stroke="#2a6434" stroke-width="9.5">Christmas</text>
<text transform="translate(1074.6 730.6) scale(1 1.36)" font-family="Liberation Serif" font-style="italic" font-size="112" stroke-linejoin="round" fill="#2a6434" stroke="#2a6434" stroke-width="9.5">Christmas</text>
<text transform="translate(1072.9 732.4) scale(1 1.36)" font-family="Liberation Serif" font-style="italic" font-size="112" stroke-linejoin="round" fill="#2a6434" stroke="#2a6434" stroke-width="9.5">Christmas</text>
<text transform="translate(1071.6 733.8) scale(1 1.36)" font-family="Liberation Serif" font-style="italic" font-size="112" stroke-linejoin="round" fill="#2a6434" stroke="#2a6434" stroke-width="9.5">Christmas</text>
<text transform="translate(1078 727) scale(1 1.36)" font-family="Liberation Serif" font-style="italic" font-size="112" stroke-linejoin="round" fill="#2a6434" stroke="#2a6434" stroke-width="8.5">Christmas</text>
<text transform="translate(1078 727) scale(1 1.36)" font-family="Liberation Serif" font-style="italic" font-size="112" stroke-linejoin="round" fill="#f4f2ec" stroke="#f4f2ec" stroke-width="2.8">Christmas</text>
<text transform="translate(1178.3 847.8) scale(1 1.26)" font-family="Liberation Serif" font-style="italic" font-size="115" stroke-linejoin="round" fill="#2a6434" stroke="#2a6434" stroke-width="9.5">Party</text>
<text transform="translate(1176.6 849.6) scale(1 1.26)" font-family="Liberation Serif" font-style="italic" font-size="115" stroke-linejoin="round" fill="#2a6434" stroke="#2a6434" stroke-width="9.5">Party</text>
<text transform="translate(1174.9 851.4) scale(1 1.26)" font-family="Liberation Serif" font-style="italic" font-size="115" stroke-linejoin="round" fill="#2a6434" stroke="#2a6434" stroke-width="9.5">Party</text>
<text transform="translate(1173.6 852.8) scale(1 1.26)" font-family="Liberation Serif" font-style="italic" font-size="115" stroke-linejoin="round" fill="#2a6434" stroke="#2a6434" stroke-width="9.5">Party</text>
<text transform="translate(1180 846) scale(1 1.26)" font-family="Liberation Serif" font-style="italic" font-size="115" stroke-linejoin="round" fill="#2a6434" stroke="#2a6434" stroke-width="8.5">Party</text>
<text transform="translate(1180 846) scale(1 1.26)" font-family="Liberation Serif" font-style="italic" font-size="115" stroke-linejoin="round" fill="#f4f2ec" stroke="#f4f2ec" stroke-width="2.8">Party</text>
<text transform="translate(1262.8999999999999 953.4) scale(0.64 1)" font-family="Liberation Sans" font-weight="bold" font-size="41.3" letter-spacing="2" fill="#c62c27" stroke="#c62c27" stroke-width="3.2" vector-effect="non-scaling-stroke" stroke-linejoin="round">7-11PM</text>
<text transform="translate(1250.1999999999998 1005.1) scale(0.6 1)" font-family="Liberation Sans" font-weight="bold" font-size="41.8" letter-spacing="2" fill="#c62c27" stroke="#c62c27" stroke-width="3.2" vector-effect="non-scaling-stroke" stroke-linejoin="round">DEC 11TH</text>
<text transform="translate(1227.3 1210.8) scale(0.62 1)" font-family="Liberation Sans" font-weight="bold" font-size="19" letter-spacing="1.2" fill="#c0302a" stroke="#c0302a" stroke-width="1.6" vector-effect="non-scaling-stroke" stroke-linejoin="round">7503 TURNER RIDGE ROAD</text>
<path d="M1174 988C1176 968 1181 948 1190 936C1198 930 1212 929 1222 936C1230 942 1236 950 1238 958L1189 966C1186 973 1184 980 1182 988z" fill="#2a6434"/>
<path d="M1189 967L1238 958C1244 960 1248 966 1247 970C1245 974 1242 974 1236 975C1220 977 1204 981 1192 986C1190 980 1189 973 1189 967z" fill="#2a6434"/>
<circle cx="1175" cy="996.4" r="9.4" fill="#2a6434"/>
<text transform="translate(1039 1089) scale(1 1.15)" font-family="Liberation Serif" font-style="italic" font-size="33.2" fill="#3a7642" stroke="#3a7642" stroke-width="0.9">Let&#8217;s make memories</text>
<text transform="translate(1150 1131) scale(1 1.15)" font-family="Liberation Serif" font-style="italic" font-size="33.3" fill="#3a7642" stroke="#3a7642" stroke-width="0.9">together at our Christmas Party!</text>
</svg>
<svg style="left:1136px;top:1278px;filter:drop-shadow(0 1px 2px rgba(0,0,0,.6))" width="56" height="70" viewBox="0 0 56 70"><path d="M17.6 7C17.6 1.2 26.8 1.2 26.8 7L26.8 24C26.8 19.5 35 19.5 35 24L35 28C35 23.5 42.8 23.5 42.8 28L42.8 32C42.8 28 50 28 50 32.5C52 33 53.5 36 53.5 41L53.5 50C53.5 60 47 66.6 39 66.6L28 66.6C22 66.6 18 62 15 57L4 38C2 33.5 7 30 10.5 33.5L17.6 41Z" fill="#fff" stroke="#000" stroke-width="3" stroke-linejoin="round"/><path d="M35 27V36M42.8 31V38" stroke="#000" stroke-width="2.4"/></svg>
</body></html>
